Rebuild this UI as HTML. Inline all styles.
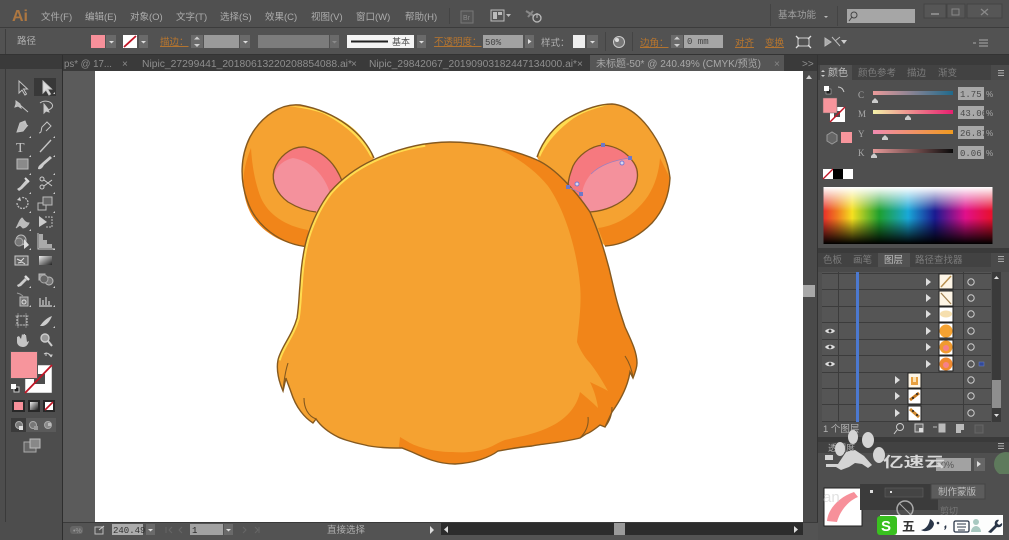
<!DOCTYPE html>
<html><head><meta charset="utf-8"><style>
html,body{margin:0;padding:0;background:#505050;width:1009px;height:540px;overflow:hidden}
svg{display:block;filter:blur(.35px)}
text{font-family:"Liberation Sans","Noto Sans CJK SC",sans-serif;fill:#b4b4b4;font-size:10px}
.o{fill:#b8762e}
.m{font-size:9.5px;fill:#adadad}
.t{font-size:10px;fill:#8e8e8e}
.n{font-family:"Liberation Mono","Noto Sans CJK SC",monospace;font-size:9px;fill:#4a4a4a}
.tool{fill:#c4c4c4;stroke:#c4c4c4;stroke-width:1}
.ln{fill:none;stroke:#c4c4c4;stroke-width:1.4}
.dd{fill:#6a6a6a}
</style></head><body>
<svg width="1009" height="540" viewBox="0 0 1009 540" xmlns="http://www.w3.org/2000/svg">
<defs>
<linearGradient id="hue" x1="0" x2="1" y1="0" y2="0">
<stop offset="0" stop-color="#e8302a"/><stop offset=".08" stop-color="#f07a20"/><stop offset=".17" stop-color="#f5e020"/><stop offset=".33" stop-color="#1fa02f"/><stop offset=".5" stop-color="#19a8d8"/><stop offset=".66" stop-color="#1a1a90"/><stop offset=".84" stop-color="#e0108a"/><stop offset="1" stop-color="#e8102a"/>
</linearGradient>
<linearGradient id="wb" x1="0" x2="0" y1="0" y2="1">
<stop offset="0" stop-color="#fff" stop-opacity="1"/><stop offset=".42" stop-color="#fff" stop-opacity="0"/><stop offset=".55" stop-color="#000" stop-opacity="0"/><stop offset="1" stop-color="#000" stop-opacity="1"/>
</linearGradient>
<linearGradient id="s1" x1="0" x2="1" y1="0" y2="0"><stop offset="0" stop-color="#eb9a9a"/><stop offset="1" stop-color="#1f6a8c"/></linearGradient>
<linearGradient id="s2" x1="0" x2="1" y1="0" y2="0"><stop offset="0" stop-color="#f3f0a8"/><stop offset="1" stop-color="#e81e70"/></linearGradient>
<linearGradient id="s3" x1="0" x2="1" y1="0" y2="0"><stop offset="0" stop-color="#f08ab0"/><stop offset="1" stop-color="#f09a20"/></linearGradient>
<linearGradient id="s4" x1="0" x2="1" y1="0" y2="0"><stop offset="0" stop-color="#e89a9a"/><stop offset="1" stop-color="#0a0a0a"/></linearGradient>
<linearGradient id="gr2" x1="0" x2="1" y1="0" y2="1"><stop offset="0" stop-color="#eee"/><stop offset="1" stop-color="#222"/></linearGradient>
<clipPath id="headclip"><path id="hp" d="M450 142C475 142 510 148 537 160C555 168 575 190 590 212C600 235 608 262 613 285C617 303 620 312 625 327C631 340 637 352 637 363C637 368 635 373 633 378L630 372C628 385 622 398 612 412L605 427L600 425C595 429 590 433 586 434L580 438C560 443 540 444 532 446C520 447 510 449 498 451C490 457 475 463 455 464C438 464 425 458 412 452L402 448C385 448 372 447 365 445C350 442 340 438 338 437C330 433 322 428 316 419L313 423C305 418 296 408 291 392C289 386 287 382 286 378L283 391C279 382 276 370 278 360C281 347 292 336 297 318C299 305 299 295 300 285C301 268 303 252 307 238C312 222 320 205 330 192C342 178 356 168 373 160C395 150 420 142 450 142Z"/></clipPath>
</defs>

<!-- panel bg -->
<rect width="1009" height="540" fill="#505050"/>
<rect x="0" y="27" width="1009" height="1" fill="#3c3c3c"/>
<rect x="0" y="28" width="1009" height="26" fill="#525252"/>
<rect x="5" y="29" width="1" height="25" fill="#3e3e3e"/>
<rect x="0" y="54" width="1009" height="1" fill="#333"/>

<!-- menu -->
<text x="12" y="21" style="font-size:16px;font-weight:bold;fill:#ad7741">Ai</text>
<text class="m" x="41" y="20">文件(F)</text>
<text class="m" x="85" y="20">编辑(E)</text>
<text class="m" x="130" y="20">对象(O)</text>
<text class="m" x="176" y="20">文字(T)</text>
<text class="m" x="220" y="20">选择(S)</text>
<text class="m" x="265" y="20">效果(C)</text>
<text class="m" x="311" y="20">视图(V)</text>
<text class="m" x="356" y="20">窗口(W)</text>
<text class="m" x="405" y="20">帮助(H)</text>
<rect x="449" y="8" width="1" height="16" fill="#444"/>
<rect x="461" y="11" width="12" height="12" fill="#555" stroke="#777"/>
<text x="463" y="20" style="font-size:7px;fill:#888">Br</text>
<rect x="491" y="10" width="13" height="11" fill="#555" stroke="#bbb"/>
<rect x="493" y="12" width="4" height="7" fill="#bbb"/><rect x="498" y="12" width="4" height="3" fill="#bbb"/>
<path d="M506 14h5l-2.500 3z" fill="#bbb"/>
<path d="M526 11l8 5 M528 17l5-6" stroke="#888" stroke-width="2" fill="none"/>
<circle cx="537" cy="18" r="4" fill="none" stroke="#bbb" stroke-width="1.300"/><path d="M537 13v5" stroke="#bbb"/>
<rect x="770" y="4" width="1" height="22" fill="#444"/>
<text class="m" x="778" y="18" style="fill:#a0a0a0">基本功能</text>
<path d="M824 16h4l-2 2z" fill="#bbb"/>
<rect x="837" y="6" width="1" height="20" fill="#444"/>
<rect x="847" y="9" width="68" height="14" fill="#a6a6a6"/>
<circle cx="854" cy="15" r="3" fill="none" stroke="#444"/><path d="M852 17l-3 4" stroke="#444"/>
<rect x="924" y="4" width="22" height="14" fill="#565656" stroke="#444"/>
<rect x="931" y="13" width="8" height="2" fill="#888"/>
<rect x="947" y="4" width="18" height="14" fill="#565656" stroke="#444"/>
<rect x="952" y="9" width="7" height="6" fill="none" stroke="#888"/>
<rect x="967" y="4" width="35" height="14" fill="#565656" stroke="#444"/>
<path d="M981 9l7 6M988 9l-7 6" stroke="#888" stroke-width="1.300"/>

<!-- control bar -->
<text x="17" y="44" style="fill:#b0b0b0;font-size:9.5px">路径</text>
<rect x="91" y="35" width="14" height="13" fill="#f7909a"/>
<rect x="106" y="35" width="10" height="13" fill="#6a6a6a"/><path d="M109 41h5l-2.500 2.500z" fill="#ddd"/>
<rect x="123" y="35" width="14" height="13" fill="#fff"/><path d="M124 47L136 36" stroke="#c01525" stroke-width="1.800"/>
<rect x="139" y="35" width="9" height="13" fill="#6a6a6a"/><path d="M141 41h5l-2.500 2.500z" fill="#ddd"/>
<text class="o" x="160" y="45" style="font-size:9.500px;text-decoration:underline">描边：</text>
<rect x="191" y="35" width="12" height="13" fill="#6a6a6a"/><path d="M197 36.500l3 3h-6zM197 47l3-3h-6z" fill="#ccc"/>
<rect x="204" y="35" width="35" height="13" fill="#9a9a9a"/>
<rect x="240" y="35" width="10" height="13" fill="#6a6a6a"/><path d="M243 41h5l-2.500 2.500z" fill="#ddd"/>
<rect x="258" y="35" width="71" height="13" fill="#7c7c7c"/>
<rect x="330" y="35" width="9" height="13" fill="#6a6a6a"/><path d="M332 41h5l-2.500 2.500z" fill="#8a8a8a"/>
<rect x="347" y="35" width="67" height="13" fill="#f4f4f4"/><rect x="351" y="40.500" width="37" height="2" fill="#222"/>
<text x="392" y="45" style="font-size:9px;fill:#555">基本</text>
<rect x="417" y="35" width="9" height="13" fill="#6a6a6a"/><path d="M419 41h5l-2.500 2.500z" fill="#ddd"/>
<text class="o" x="434" y="45" style="font-size:9.500px;text-decoration:underline">不透明度：</text>
<rect x="483" y="35" width="40" height="13" fill="#a2a2a2"/>
<text x="485" y="45" style="font-size:9px;fill:#444;font-family:'Liberation Mono',monospace">50%</text>
<rect x="525" y="35" width="9" height="13" fill="#6a6a6a"/><path d="M528 39l3.500 2.500-3.500 2.500z" fill="#ddd"/>
<text x="541" y="46" style="font-size:9.500px;fill:#b0b0b0">样式：</text>
<rect x="573" y="35" width="12" height="13" fill="#eee"/>
<rect x="587" y="35" width="11" height="13" fill="#6a6a6a"/><path d="M590 41h5l-2.500 2.500z" fill="#ddd"/>
<rect x="605" y="32" width="1" height="19" fill="#444"/><rect x="632" y="32" width="1" height="19" fill="#444"/>
<circle cx="619" cy="42" r="5.500" fill="#777" stroke="#ccc"/><circle cx="617" cy="40" r="2" fill="#ddd"/>
<text class="o" x="640" y="46" style="font-size:9.500px;text-decoration:underline">边角：</text>
<rect x="671" y="35" width="12" height="13" fill="#6a6a6a"/><path d="M677 36.500l3 3h-6zM677 47l3-3h-6z" fill="#ccc"/>
<rect x="684" y="35" width="39" height="13" fill="#a6a6a6"/>
<text x="687" y="44" style="font-size:9px;fill:#444;font-family:'Liberation Mono',monospace">0 mm</text>
<text class="o" x="735" y="46" style="font-size:9.500px;text-decoration:underline">对齐</text>
<text class="o" x="765" y="46" style="font-size:9.500px;text-decoration:underline">变换</text>
<rect x="798" y="38" width="11" height="8" fill="none" stroke="#ccc"/>
<path d="M796 36l3 3M811 36l-3 3M796 48l3-3M811 48l-3-3" stroke="#ddd" stroke-width="1.300"/>
<path d="M825 38l6 4-6 4zM832 37l8 9M840 37l-5 4" fill="#aaa" stroke="#bbb"/>
<path d="M841 40h6l-3 4z" fill="#ccc"/>
<path d="M973 43h3" stroke="#aaa"/><path d="M979 40h9M979 43h9M979 46h9" stroke="#aaa"/>

<!-- tab bar -->
<rect x="0" y="55" width="1009" height="16" fill="#3a3a3a"/>
<rect x="590" y="55" width="194" height="16" fill="#565656"/>
<text class="t" x="64" y="67" textLength="48" lengthAdjust="spacingAndGlyphs">ps* @ 17...</text>
<text class="t" x="122" y="67">×</text>
<text class="t" x="142" y="67" textLength="210" lengthAdjust="spacingAndGlyphs">Nipic_27299441_20180613220208854088.ai*</text>
<text class="t" x="351" y="67">×</text>
<text class="t" x="369" y="67" textLength="208" lengthAdjust="spacingAndGlyphs">Nipic_29842067_20190903182447134000.ai*</text>
<text class="t" x="577" y="67">×</text>
<text x="596" y="67" textLength="165" lengthAdjust="spacingAndGlyphs" style="fill:#a8a8a8">未标题-50* @ 240.49% (CMYK/预览)</text>
<text class="t" x="774" y="67" style="fill:#888">×</text>
<text class="t" x="802" y="67">&gt;&gt;</text>

<!-- left toolbar -->
<rect x="0" y="69" width="63" height="453" fill="#4d4d4d"/>
<rect x="5" y="69" width="1" height="453" fill="#3a3a3a"/>
<rect x="62" y="55" width="1" height="485" fill="#2e2e2e"/>
<rect x="34" y="78" width="22" height="18" fill="#383838"/>
<g class="tool">
<path d="M19 81v12l3-3 3 5 1.500-1-3-5h4z" fill="#444"/>
<path d="M43 81v12l3-3 3 5 1.500-1-3-5h4z" fill="#ddd"/>
<path d="M16 101l4 3 1 4-3-2-3 1 1-3zM20 105l8 7" fill="#bbb"/>
<path d="M40 103c4-3 10-2 12 1s-2 6-5 6" fill="none"/><path d="M44 104v9l2-2 3 1-1-3z" fill="#ccc"/>
<path d="M17 132l3-9 5-2 2 5-4 5zM23 122l5 4" fill="#bbb"/>
<path d="M39 133c3 0 2-4 3-6l5-5 4 4-5 5" fill="none"/>
</g>
<text x="16" y="152" style="font-size:14px;font-family:'Liberation Serif',serif;fill:#c4c4c4">T</text>
<path d="M40 152l11-12" class="ln"/>
<rect x="17" y="159" width="11" height="10" fill="#8a8a8a" stroke="#bbb"/>
<path d="M38 169c3 1 5-2 6-4l8-7-2-2-8 7c-2 2-4 3-4 6z" fill="#ccc"/>
<path d="M17 189l3-2 6-7 3 2-7 7-3 2z" fill="#ccc"/><path d="M25 178l4 4" stroke="#ddd" stroke-width="2"/>
<circle cx="42" cy="187" r="2" fill="none" stroke="#ccc"/><circle cx="42" cy="179" r="2" fill="none" stroke="#ccc"/><path d="M44 180l8 6M44 186l8-6" stroke="#ccc"/>
<path d="M17 203a5.500 5.500 0 1 0 5-5.500" fill="none" stroke="#bbb" stroke-dasharray="2 1" stroke-width="1.300"/><path d="M17 200l3-3 1 4z" fill="#ccc"/>
<rect x="38" y="203" width="8" height="7" fill="none" stroke="#bbb"/><rect x="43" y="197" width="9" height="8" fill="#666" stroke="#bbb"/>
<path d="M16 228c2-2 3-8 6-10 2 2 3 5 7 5-1 3-4 5-6 5l-3-3z" fill="#bbb" stroke="#bbb"/>
<path d="M39 216v11l8-5z" fill="#ccc"/><path d="M45 217h7v10h-6" fill="none" stroke="#bbb" stroke-dasharray="2 1"/>
<circle cx="21" cy="240" r="5" fill="#666" stroke="#bbb"/><circle cx="19" cy="242" r="4" fill="#777" stroke="#aaa"/><path d="M24 239v10l5-4z" fill="#ddd"/>
<path d="M39 234h4v14h-4zM43 240h4v8h-4zM47 244h5v4h-5z" fill="#aaa"/><path d="M38 233v16h16" fill="none" stroke="#ccc"/>
<rect x="15" y="256" width="13" height="9" fill="#666" stroke="#ccc"/><path d="M17 259l4 2 3-3M18 263l4-1 3 2" stroke="#ddd" fill="none"/>
<rect x="39" y="256" width="13" height="9" fill="url(#gr2)"/>
<path d="M17 285l2-1 6-6 2 2-6 6-3 1z" fill="#ccc"/><path d="M25 276l4 4" stroke="#ddd" stroke-width="2.500"/>
<circle cx="49" cy="281" r="4" fill="#777" stroke="#bbb"/><rect x="39" y="274" width="6" height="6" fill="#999" stroke="#bbb"/><circle cx="44" cy="279" r="4" fill="#666" stroke="#aaa"/>
<rect x="20" y="297" width="8" height="9" fill="#777" stroke="#bbb"/><circle cx="24" cy="302" r="2" fill="none" stroke="#ddd"/><path d="M17 293l3 1 3 2" stroke="#999"/>
<path d="M40 305v-7M43 305v-5M46 305v-8M49 305v-4M39 306h13" stroke="#bbb" stroke-width="1.400"/>
<rect x="17" y="316" width="10" height="9" fill="none" stroke="#ccc" stroke-dasharray="2 1"/><path d="M15 316h14M15 325h14M18 313v15M26 313v15" stroke="#aaa" stroke-width=".6"/>
<path d="M40 326c2-3 6-8 12-10-2 5-5 9-9 10z" fill="#ccc"/>
<path d="M17 337v5c0 3 3 5 6 5s5-2 6-6l-2 1-1-7h-1v-1h-1l-1 1-1-1-1 5-2-3z" fill="#c4c4c4"/>
<circle cx="45" cy="338" r="4" fill="#999" stroke="#ccc" stroke-width="1.400"/><path d="M48 341l4 5" stroke="#ccc" stroke-width="2"/>
<g fill="#ccc"><path d="M31 136l-2 2h2zM31 155l-2 2h2zM31 173l-2 2h2zM31 192l-2 2h2zM31 211l-2 2h2zM31 229l-2 2h2zM31 248l-2 2h2zM31 286l-2 2h2zM31 305l-2 2h2zM55 92l-2 2h2zM55 136l-2 2h2zM55 155l-2 2h2zM55 173l-2 2h2zM55 192l-2 2h2zM55 211l-2 2h2zM55 248l-2 2h2zM55 286l-2 2h2zM55 305l-2 2h2zM55 326l-2 2h2z"/></g>

<rect x="25" y="365" width="27" height="28" fill="#fff" stroke="#555" stroke-width=".5"/>
<rect x="34" y="374" width="11" height="10" fill="#4d4d4d"/>
<path d="M25 393L52 365" stroke="#c01525" stroke-width="1.800"/>
<rect x="10.500" y="351.500" width="27" height="27" fill="#f7959c" stroke="#555"/>
<path d="M44 354c3-2 6 0 7 3M44 354l2-1v3M51 357l1-2-3 0" stroke="#ccc" fill="none"/>
<rect x="14" y="387" width="5" height="5" fill="#222" stroke="#ccc"/><rect x="11" y="384" width="5" height="5" fill="#fff"/>
<rect x="12" y="400" width="13" height="12" fill="#282828"/><rect x="14" y="402" width="9" height="8" fill="#f7909a"/>
<rect x="28" y="400" width="12" height="12" fill="#282828"/><rect x="30" y="402" width="8" height="8" fill="url(#gr2)"/>
<rect x="43" y="400" width="12" height="12" fill="#282828"/><rect x="45" y="402" width="8" height="8" fill="#fff"/><path d="M45 410l8-8" stroke="#c01525" stroke-width="1.600"/>
<rect x="11" y="418" width="15" height="14" fill="#3a3a3a"/><rect x="26" y="418" width="30" height="14" fill="#5a5a5a"/>
<circle cx="19" cy="425" r="3.500" fill="#777" stroke="#aaa"/><rect x="19" y="426" width="4" height="4" fill="#ddd"/>
<circle cx="33" cy="425" r="3.500" fill="#777" stroke="#aaa"/><rect x="34" y="426" width="4" height="4" fill="#999"/>
<circle cx="48" cy="425" r="3.500" fill="#888" stroke="#aaa"/><rect x="48" y="423" width="3" height="3" fill="#bbb"/>
<rect x="24" y="442" width="12" height="10" fill="#666" stroke="#aaa"/><rect x="30" y="439" width="10" height="9" fill="#888" stroke="#bbb"/>

<!-- canvas -->
<rect x="63" y="71" width="32" height="451" fill="#5b5b5b"/>
<rect x="95" y="71" width="708" height="451" fill="#fff"/>

<!-- Left ear -->
<path d="M374 158C363 133 337 112 300 105C282 103 262 115 250 137C240 157 240 180 247 200C255 225 280 245 310 247Z" fill="#f5a231"/>
<path d="M251 148C240 175 242 195 250 212C260 232 285 246 310 247L308 230C285 226 268 214 261 198C255 183 252 165 251 148Z" fill="#f18519"/>
<path d="M290 106C320 107 345 118 360 135C367 144 371 150 372 158L370 156C362 140 345 124 322 113C310 109 300 108 290 106Z" fill="#ffdc50"/>
<path d="M374 158C363 133 337 112 300 105C282 103 262 115 250 137C240 157 240 180 247 200C255 225 280 245 310 247" fill="none" stroke="#85591f" stroke-width="1.400"/>
<path d="M305 147C290 146 278 158 274 170C271 182 277 194 288 202C298 208 306 211 316 212L345 190C340 172 330 153 305 147Z" fill="#f6797f"/>
<path d="M293 158C283 160 274 168 274 178C275 190 282 198 292 204C300 208 307 211 316 212L331 197C327 180 315 162 293 158Z" fill="#f4919c"/>
<path d="M345 190C340 172 330 153 305 147C290 146 278 158 274 170C271 182 277 194 288 202C298 208 306 211 316 212" fill="none" stroke="#85591f" stroke-width="1.300"/>

<!-- Right ear -->
<path d="M537 157C543 140 555 125 570 117C585 109 600 104 612 104C625 105 637 113 648 127C660 143 668 160 670 178C669 198 662 212 652 223C638 237 622 245 605 246L560 200Z" fill="#f5a231"/>
<path d="M660 158C666 170 670 178 670 180C669 198 662 212 652 223C638 237 622 245 605 246L598 228C620 225 637 212 648 196C655 185 659 172 660 158Z" fill="#f18519"/>
<path d="M538 154C545 138 556 126 570 117C580 112 595 105 612 104C600 107 585 111 574 118C560 128 547 141 540 157Z" fill="#ffdc50"/>
<path d="M537 157C543 140 555 125 570 117C585 109 600 104 612 104C625 105 637 113 648 127C660 143 668 160 670 178C669 198 662 212 652 223C638 237 622 245 605 246" fill="none" stroke="#85591f" stroke-width="1.400"/>
<path d="M603 145C590 146 578 156 573 166C570 174 568 180 568 187L590 212C605 211 620 205 630 194C638 185 640 172 634 163C626 151 615 146 603 145Z" fill="#f6797f"/>
<path d="M630 158C615 160 600 165 591 174C584 182 581 192 582 200L590 212C605 211 620 205 630 194C638 185 640 172 630 158Z" fill="#f4919c"/>
<path d="M568 187C568 180 570 174 573 166C578 156 590 146 603 145C615 146 626 151 634 163C640 172 638 185 630 194C620 205 605 211 590 212" fill="none" stroke="#85591f" stroke-width="1.300"/>

<!-- Head -->
<use href="#hp" fill="#f5a231"/>
<g clip-path="url(#headclip)">
<path d="M493 147C515 155 535 170 548 186C565 210 577 250 580 285C582 305 578 330 577 342C580 350 585 358 590 363C597 372 603 382 608 391C603 388 596 385 590 382C594 390 597 400 598 408C592 402 586 397 580 392C578 402 572 411 565 417C555 426 540 432 523 436C513 438 510 439 505 440C497 443 492 447 485 449C475 452 465 453 452 452C435 452 420 448 410 443L400 437L395 480L660 480L660 140Z" fill="#f18519"/>
<path d="M278 360C281 347 292 336 297 318C299 305 299 295 300 285C301 268 303 252 307 238C312 222 320 205 330 192C342 178 356 168 373 160C390 152 405 147 425 144" fill="none" stroke="#ffdc50" stroke-width="5.500"/>
</g>
<use href="#hp" fill="none" stroke="#85591f" stroke-width="1.400"/>
<path d="M283 391C284 380 285 372 288 363M304 398C304 408 308 416 316 419M633 378C632 370 629 362 625 356M605 427C610 421 612 414 612 407M580 438C586 432 589 425 588 417" fill="none" stroke="#85591f" stroke-width="1.100"/>

<!-- anchors -->
<path d="M568 187L581 193M630 158C615 160 600 165 591 174" fill="none" stroke="#9a80c0" stroke-width=".8"/>
<g fill="#6e78c8"><rect x="566" y="185" width="4" height="4"/><rect x="579" y="192" width="4" height="4"/><rect x="628" y="156" width="4" height="4"/><rect x="601" y="143" width="4" height="4"/></g>
<circle cx="577" cy="184" r="2" fill="#d8d8f0" stroke="#7a7ad0"/><circle cx="622" cy="163" r="2" fill="#d8d8f0" stroke="#7a7ad0"/>

<!-- v scrollbar -->
<rect x="803" y="71" width="15" height="451" fill="#4a4a4a"/>
<rect x="803" y="285" width="12" height="12" fill="#a8a8a8"/>
<path d="M806 79l3-4 3 4z" fill="#ccc"/>
<rect x="817" y="55" width="1" height="485" fill="#333"/>

<!-- right panel: color -->
<rect x="818" y="55" width="191" height="465" fill="#4f4f4f"/>
<rect x="818" y="55" width="191" height="10" fill="#3a3a3a"/>
<rect x="818" y="65" width="173" height="15" fill="#424242"/>
<rect x="991" y="65" width="18" height="15" fill="#4a4a4a"/>
<rect x="820" y="65" width="32" height="15" fill="#505050"/>
<text x="828" y="76" style="font-size:10px;fill:#c0c0c0">颜色</text>
<text x="858" y="76" style="font-size:9.500px;fill:#7c7c7c">颜色参考</text>
<text x="907" y="76" style="font-size:9.500px;fill:#7c7c7c">描边</text>
<text x="938" y="76" style="font-size:9.500px;fill:#7c7c7c">渐变</text>
<path d="M821 72l2-2 2 2zM821 75l2 2 2-2z" fill="#ccc"/>
<path d="M998 70h6v1h-6zM998 72.500h6v1h-6zM998 75h6v1h-6z" fill="#aaa"/>
<rect x="826" y="89" width="5" height="5" fill="#222" stroke="#ccc" stroke-width=".5"/><rect x="824" y="86" width="5" height="5" fill="#fff"/>
<path d="M838 87c3 0 5 2 6 5" stroke="#ccc" fill="none"/>
<rect x="830" y="107" width="15" height="15" fill="#fff"/><rect x="834" y="111" width="6" height="6" fill="#4f4f4f"/><path d="M830 122l15-15" stroke="#c01525" stroke-width="1.500"/>
<rect x="823" y="98" width="14" height="15" fill="#f7959c" stroke="#666" stroke-width=".5"/>
<path d="M827 135l5-3 5 3v6l-5 3-5-3z" fill="#666" stroke="#999"/>
<rect x="841" y="132" width="11" height="11" fill="#f7959c"/>
<text x="858" y="98" style="font-size:9px;fill:#aaa;font-family:'Liberation Serif',serif">C</text>
<text x="858" y="117" style="font-size:9px;fill:#aaa;font-family:'Liberation Serif',serif">M</text>
<text x="858" y="137" style="font-size:9px;fill:#aaa;font-family:'Liberation Serif',serif">Y</text>
<text x="858" y="156" style="font-size:9px;fill:#aaa;font-family:'Liberation Serif',serif">K</text>
<rect x="873" y="91" width="80" height="4" fill="url(#s1)"/>
<rect x="873" y="110" width="80" height="4" fill="url(#s2)"/>
<rect x="873" y="130" width="80" height="4" fill="url(#s3)"/>
<rect x="873" y="149" width="80" height="4" fill="url(#s4)"/>
<g fill="#ccc"><path d="M872 101l3-3 3 3v2h-6z"/><path d="M905 118l3-3 3 3v2h-6z"/><path d="M882 138l3-3 3 3v2h-6z"/><path d="M871 156l3-3 3 3v2h-6z"/></g>
<g fill="#a8a8a8"><rect x="958" y="87" width="26" height="13"/><rect x="958" y="106" width="26" height="13"/><rect x="958" y="126" width="26" height="13"/><rect x="958" y="146" width="26" height="13"/></g>
<text class="n" x="960" y="97">1.75</text><text class="n" x="960" y="116">43.06</text><text class="n" x="960" y="136">26.87</text><text class="n" x="960" y="156">0.06</text>
<text x="986" y="97" style="font-size:8px;fill:#aaa">%</text><text x="986" y="116" style="font-size:8px;fill:#aaa">%</text><text x="986" y="136" style="font-size:8px;fill:#aaa">%</text><text x="986" y="156" style="font-size:8px;fill:#aaa">%</text>
<rect x="823" y="169" width="10" height="10" fill="#fff"/><path d="M823 179l10-10" stroke="#c01525" stroke-width="1.300"/>
<rect x="833" y="169" width="10" height="10" fill="#000"/><rect x="843" y="169" width="10" height="10" fill="#fff"/>
<rect x="823.500" y="187" width="169" height="57" fill="url(#hue)"/>
<rect x="823.500" y="187" width="169" height="57" fill="url(#wb)"/>

<!-- layers -->
<rect x="818" y="248" width="191" height="5" fill="#3a3a3a"/>
<rect x="818" y="253" width="173" height="14" fill="#424242"/>
<rect x="991" y="253" width="18" height="14" fill="#4a4a4a"/>
<rect x="878" y="253" width="32" height="14" fill="#525252"/>
<text x="823" y="263" style="font-size:9.500px;fill:#7c7c7c">色板</text>
<text x="853" y="263" style="font-size:9.500px;fill:#7c7c7c">画笔</text>
<text x="884" y="263" style="font-size:9.500px;fill:#c0c0c0">图层</text>
<text x="915" y="263" style="font-size:9.500px;fill:#7c7c7c">路径查找器</text>
<path d="M998 256h6v1h-6zM998 258.500h6v1h-6zM998 261h6v1h-6z" fill="#aaa"/>
<rect x="818" y="267" width="191" height="5" fill="#4a4a4a"/>
<rect x="822" y="272" width="169" height="150" fill="#555"/>
<g fill="#3c3c3c">
<rect x="822" y="273" width="169" height="1"/><rect x="822" y="289" width="169" height="1"/><rect x="822" y="306" width="169" height="1"/><rect x="822" y="322" width="169" height="1"/><rect x="822" y="339" width="169" height="1"/><rect x="822" y="355" width="169" height="1"/><rect x="822" y="372" width="169" height="1"/><rect x="822" y="388" width="169" height="1"/><rect x="822" y="404" width="169" height="1"/><rect x="822" y="421" width="169" height="1"/>
<rect x="838" y="272" width="1" height="150"/><rect x="963" y="272" width="1" height="150"/>
</g>
<rect x="856" y="272" width="3" height="150" fill="#4c79d0"/>
<g fill="#ddd"><path d="M926 278l5 4-5 4z"/><path d="M926 294l5 4-5 4z"/><path d="M926 310l5 4-5 4z"/><path d="M926 327l5 4-5 4z"/><path d="M926 343l5 4-5 4z"/><path d="M926 360l5 4-5 4z"/><path d="M895 376l5 4-5 4z"/><path d="M895 392l5 4-5 4z"/><path d="M895 409l5 4-5 4z"/></g>
<g fill="none" stroke="#ccc" stroke-width="1"><circle cx="971" cy="282" r="3.200"/><circle cx="971" cy="298" r="3.200"/><circle cx="971" cy="314" r="3.200"/><circle cx="971" cy="331" r="3.200"/><circle cx="971" cy="347" r="3.200"/><circle cx="971" cy="364" r="3.200"/><circle cx="971" cy="380" r="3.200"/><circle cx="971" cy="396" r="3.200"/><circle cx="971" cy="413" r="3.200"/></g>
<rect x="979" y="362" width="5" height="4" fill="#334a9a" stroke="#6a80c8" stroke-width=".5"/>
<path d="M825 331c2-3 8-3 10 0-2 3-8 3-10 0z" fill="#ddd"/><circle cx="830" cy="331" r="1.500" fill="#333"/>
<path d="M825 347c2-3 8-3 10 0-2 3-8 3-10 0z" fill="#ddd"/><circle cx="830" cy="347" r="1.500" fill="#333"/>
<path d="M825 364c2-3 8-3 10 0-2 3-8 3-10 0z" fill="#ddd"/><circle cx="830" cy="364" r="1.500" fill="#333"/>
<!-- thumbs -->
<rect x="939" y="274" width="14" height="15" fill="#fdf5e6" stroke="#222"/><path d="M941 287l10-11" stroke="#b89050" stroke-width="1.500"/>
<rect x="939" y="291" width="14" height="15" fill="#fdf5e6" stroke="#222"/><path d="M941 293l10 11" stroke="#a08050" stroke-width="1.300"/>
<rect x="939" y="307" width="14" height="15" fill="#fff" stroke="#222"/><ellipse cx="946" cy="314" rx="6" ry="3.500" fill="#f6dfae"/>
<rect x="939" y="323" width="14" height="15" fill="#fff" stroke="#222"/><circle cx="946" cy="331" r="6.500" fill="#f5a231"/>
<rect x="939" y="340" width="14" height="15" fill="#fff" stroke="#222"/><circle cx="946" cy="347" r="6.500" fill="#f09a30"/><circle cx="946" cy="348" r="3" fill="#f6808a"/>
<rect x="939" y="356" width="14" height="15" fill="#fff" stroke="#222"/><circle cx="946" cy="364" r="6.500" fill="#f08a30"/><circle cx="946" cy="365" r="3" fill="#f6808a"/>
<rect x="908" y="373" width="13" height="15" fill="#fdf5e6" stroke="#222"/><path d="M911 377h7v8h-7z" fill="#e8a040"/><rect x="913" y="377" width="3" height="5" fill="#fbe0b0"/>
<rect x="908" y="389" width="13" height="15" fill="#fff" stroke="#222"/><path d="M910 400l9-7" stroke="#c87a20" stroke-width="3"/><circle cx="913" cy="398" r="1" fill="#222"/><circle cx="917" cy="394" r="1" fill="#222"/>
<rect x="908" y="406" width="13" height="15" fill="#fff" stroke="#222"/><path d="M910 409l9 8" stroke="#d08a30" stroke-width="3"/><circle cx="913" cy="411" r="1" fill="#222"/><circle cx="917" cy="415" r="1" fill="#222"/>
<!-- layers scroll -->
<rect x="992" y="272" width="9" height="150" fill="#3a3a3a"/>
<path d="M994 279l2.500-3 2.500 3z" fill="#ddd"/><path d="M994 414l2.500 3 2.500-3z" fill="#ddd"/>
<rect x="992" y="380" width="9" height="28" fill="#8e8e8e"/>
<text x="823" y="432" style="font-size:9.500px;fill:#b4b4b4">1 个图层</text>
<circle cx="900" cy="427" r="3.500" fill="none" stroke="#ccc"/><path d="M897 430l-3 4" stroke="#ccc"/>
<rect x="915" y="424" width="8" height="8" fill="#666" stroke="#ccc"/><rect x="919" y="428" width="4" height="4" fill="#ddd"/>
<path d="M933 427h4M939 424h6v8h-6z" fill="#bbb" stroke="#bbb"/>
<path d="M956 424h8v6h-3v3h-5z" fill="#bbb"/>
<rect x="975" y="425" width="8" height="8" fill="#555" stroke="#666"/>

<!-- transparency -->
<rect x="818" y="437" width="191" height="5" fill="#3a3a3a"/>
<rect x="818" y="442" width="191" height="11" fill="#424242"/>
<text x="828" y="451" style="font-size:9px;fill:#aaa">透明度</text>
<path d="M998 443h6v1h-6zM998 445.500h6v1h-6zM998 448h6v1h-6z" fill="#aaa"/>
<rect x="936" y="458" width="35" height="13" fill="#a2a2a2"/>
<text x="941" y="468" style="font-size:9px;fill:#555">0%</text>
<rect x="974" y="458" width="11" height="13" fill="#666"/><path d="M977 461l4 3-4 3z" fill="#ddd"/>
<circle cx="1006" cy="464" r="12" fill="#5e7a5c"/>
<rect x="818" y="474" width="191" height="48" fill="#4f4f4f"/>
<rect x="824" y="488" width="38" height="38" fill="#fff" stroke="#222"/>
<path d="M827 521c1-12 12-24 27-29l4 5c-10 4-18 14-21 25z" fill="#f7909a"/>
<text x="823" y="502" style="font-size:15px;fill:#c9c9c9;opacity:.55">an</text>
<rect x="860" y="484" width="78" height="26" fill="#3b3b3b"/>
<rect x="870" y="490" width="3" height="3" fill="#ddd"/><rect x="885" y="488" width="38" height="9" fill="#444" stroke="#666" stroke-width=".5"/>
<rect x="890" y="491" width="2" height="2" fill="#ddd"/>
<rect x="931" y="484" width="54" height="15" fill="#5c5c5c" stroke="#444"/>
<text x="938" y="495" style="font-size:9.500px;fill:#bcbcbc">制作蒙版</text>
<text x="940" y="514" style="font-size:9px;fill:#777">剪切</text>
<circle cx="905" cy="509" r="8" fill="none" stroke="#aaa" stroke-width="1.500"/><path d="M899 503l12 12" stroke="#aaa"/>

<!-- watermark paw -->
<g fill="#d4d4d4">
<ellipse cx="853" cy="437" rx="5" ry="7"/><ellipse cx="868" cy="440" rx="6" ry="8"/><ellipse cx="840" cy="449" rx="5" ry="7"/><ellipse cx="879" cy="455" rx="6" ry="8"/>
<path d="M846 452l9-2 9 6 8 9-4 3-6-4-7-1-6 4-8 3-5-3 6-9z"/>
<rect x="825" y="455" width="8" height="5"/><rect x="826" y="464" width="22" height="3"/>
</g>
<text x="883" y="467" style="font-size:14px;font-weight:bold;fill:#d8d8d8" textLength="62" lengthAdjust="spacingAndGlyphs">亿速云</text>

<!-- status bar -->
<rect x="63" y="522" width="755" height="18" fill="#535353"/>
<rect x="63" y="522" width="755" height="1" fill="#3a3a3a"/>
<rect x="0" y="522" width="62" height="18" fill="#4d4d4d"/>
<rect x="70" y="526" width="13" height="8" fill="#666" rx="3"/><text x="73" y="533" style="font-size:7px;fill:#999">•%</text>
<rect x="95" y="527" width="8" height="7" fill="none" stroke="#bbb"/><path d="M99 530l5-4" stroke="#ccc"/>
<rect x="112" y="524" width="31" height="11" fill="#acacac"/>
<text class="n" x="113" y="533" style="fill:#333">240.49</text>
<rect x="146" y="524" width="9" height="11" fill="#6a6a6a"/><path d="M148 529h5l-2.500 2.500z" fill="#ddd"/>
<path d="M166 527v6M172 527l-3 3 3 3M182 527l-3 3 3 3" stroke="#666" fill="none"/>
<rect x="190" y="524" width="33" height="11" fill="#a2a2a2"/><text class="n" x="192" y="533" style="fill:#222">1</text>
<rect x="224" y="524" width="9" height="11" fill="#6a6a6a"/><path d="M226 529h5l-2.500 2.500z" fill="#ddd"/>
<path d="M243 527l3 3-3 3M255 527l3 3-3 3M259 527v6" stroke="#666" fill="none"/>
<text x="327" y="533" style="font-size:9.500px;fill:#b0b0b0">直接选择</text>
<path d="M430 526l4 4-4 4z" fill="#ddd"/>
<rect x="441" y="523" width="362" height="12" fill="#2c2c2c"/>
<path d="M448 526l-4 3.500 4 3.500z" fill="#ddd"/>
<rect x="614" y="523" width="11" height="12" fill="#9a9a9a"/>
<path d="M794 526l4 3.500-4 3.500z" fill="#ddd"/>

<!-- IME bar -->
<rect x="880" y="515" width="123" height="20" fill="#fdfdfd"/>
<rect x="877" y="516" width="20" height="19" rx="3" fill="#39c01f"/>
<text x="881" y="531" style="font-size:15px;font-weight:bold;fill:#fff">S</text>
<text x="902" y="531" style="font-size:13px;fill:#333;font-weight:bold">五</text>
<path d="M930 519c-1 6-4 10-9 11 5 3 12 0 13-6 0-2-2-4-4-5z" fill="#2a3648"/>
<circle cx="938" cy="523" r="1.300" fill="#2a3648"/><path d="M946 525c1 2 0 5-2 5 1-1 1-3 0-3z" fill="#2a3648"/>
<rect x="954" y="521" width="15" height="11" rx="1.500" fill="none" stroke="#2a3648" stroke-width="1.300"/><path d="M957 524h9M957 527h9M958 530h7" stroke="#2a3648"/>
<circle cx="976" cy="522" r="3" fill="#a8c8c0"/><path d="M971 532c0-4 3-6 5-6s5 2 5 6z" fill="#a8c8c0"/>
<path d="M988 532l7-7c-1-3 1-6 4-5l-2 3 2 2 3-2c1 3-2 5-5 4l-6 6z" fill="#2a3648"/>
</svg>
</body></html>
